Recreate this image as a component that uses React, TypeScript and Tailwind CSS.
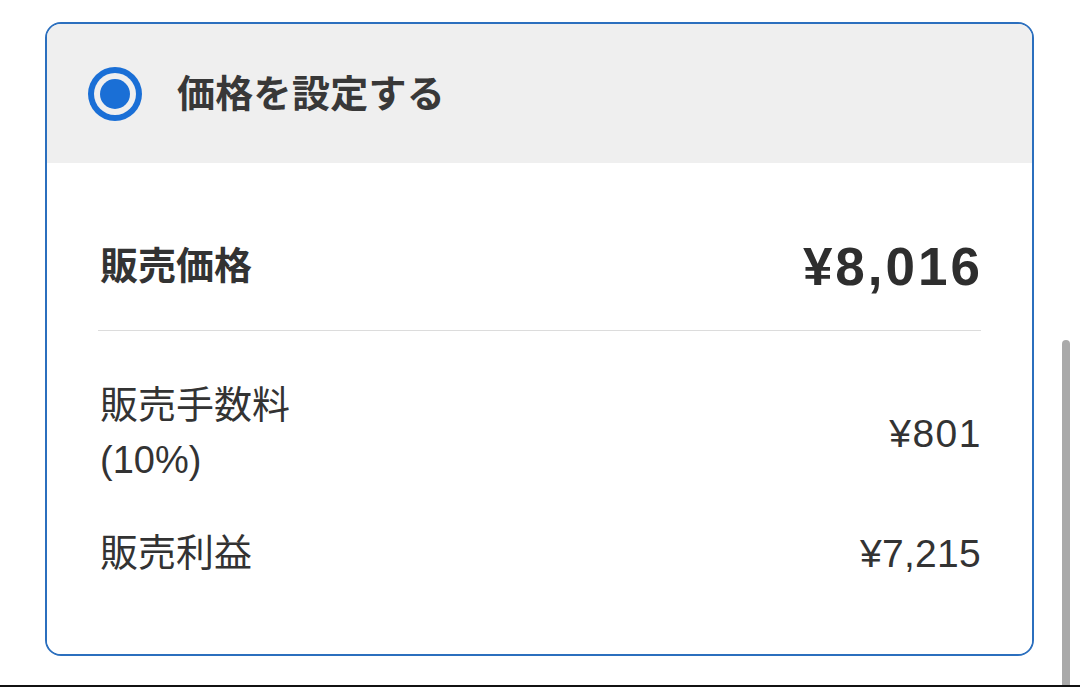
import React from "react";

const font = { fontFamily: '"Liberation Sans", "Noto Sans CJK JP", sans-serif' };

export default function App() {
  return (
    <div className="relative w-[1080px] h-[687px] bg-white overflow-hidden text-[#333333]" style={font}>
      <div className="flex h-[685px]">
        <div className="flex-1 pl-[45px] pr-[28px] pt-[22px]">
          <div className="rounded-[16px] border-2 border-[#2b6fbe] overflow-hidden h-[634px] flex flex-col">
            <div className="h-[139px] bg-[#efefef] flex items-center pl-[41px] gap-[35px] shrink-0">
              <div className="w-[54px] h-[54px] rounded-full bg-[#1a6fd6] flex items-center justify-center">
                <div className="w-[42px] h-[42px] rounded-full bg-[#efefef] flex items-center justify-center">
                  <div className="w-[30px] h-[30px] rounded-full bg-[#1a6fd6]" />
                </div>
              </div>
              <span className="text-[38px] font-bold leading-none tracking-[0.3px] text-[#383838]">価格を設定する</span>
            </div>
            <div className="flex-1 bg-white px-[51px] pt-[40px]">
              <div className="h-[128px] flex items-center justify-between border-b border-[#dcdcdc]">
                <span className="text-[38px] font-bold pl-[2px] text-[#333]">販売価格</span>
                <span className="text-[53px] font-bold tracking-[3px] leading-none mr-[-2px] text-[#2e2e2e]">¥8,016</span>
              </div>
              <div className="flex items-center justify-between pt-[47px]">
                <div className="text-[38px] leading-[55px] pl-[2px]">
                  <div>販売手数料</div>
                  <div>(10%)</div>
                </div>
                <span className="text-[39px] leading-none tracking-[1.5px] mr-[-1px]">¥801</span>
              </div>
              <div className="flex items-center justify-between mt-[38px]">
                <span className="text-[38px] leading-[55px] pl-[2px]">販売利益</span>
                <span className="text-[39px] leading-none tracking-[0.3px] mr-[0px]">¥7,215</span>
              </div>
            </div>
          </div>
        </div>
        <div className="w-[18px] flex flex-col pt-[340px] pr-[10px]">
          <div className="flex-1 w-[8px] bg-[#a9a9a9] rounded-t-[4px]" />
        </div>
      </div>
      <div className="h-[2px] bg-[#111111]" />
    </div>
  );
}
